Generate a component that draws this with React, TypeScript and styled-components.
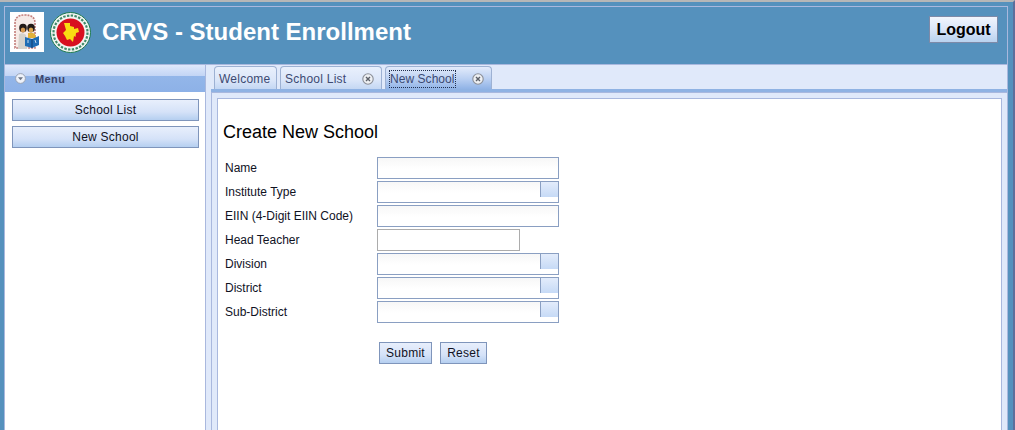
import * as React from 'react';
import styled, { createGlobalStyle } from 'styled-components';

const GlobalStyle = createGlobalStyle`
    html, body {
        margin: 0;
        padding: 0;
        background: #5591bd;
    }
    body {
        font-family: "Liberation Sans", Arial, sans-serif;
    }
`;

function SchoolLogo() {
    return (
        <LogoBox>
            <svg width="34" height="40" viewBox="0 0 34 40">
                <path d="M5 36 L5 11 Q5 3 15 3 Q25 3 25 11 L25 36 Z" fill="#f7ebe7" stroke="#c47f7c" strokeWidth="1.6" strokeDasharray="2 1" />
                <path d="M8 37 L9 22 Q13 20 16 23 L17 37 Z" fill="#d5d2cc" />
                <path d="M18 21 Q22 20 25 22 L26 26 L18 26 Z" fill="#e3b23a" />
                <ellipse cx="13" cy="16" rx="3.8" ry="4.2" fill="#231a17" />
                <ellipse cx="21" cy="16" rx="3.8" ry="4.2" fill="#231a17" />
                <ellipse cx="13" cy="18" rx="2.3" ry="2.5" fill="#d99a50" />
                <ellipse cx="21" cy="18" rx="2.3" ry="2.5" fill="#e0a84f" />
                <path d="M15 25 L22 27 L29 24 L29 33 L22 36 L15 34 Z" fill="#1f6db5" />
                <path d="M22 27 L22 36" stroke="#0f3460" strokeWidth="0.8" />
                <path d="M25 28 l1 3 M18 28 l0 3" stroke="#d8e8f5" strokeWidth="0.9" />
            </svg>
        </LogoBox>
    );
}

function GovSeal() {
    return (
        <svg width="41" height="41" viewBox="0 0 41 41">
            <circle cx="20.5" cy="20.5" r="20" fill="#f3f6f2" stroke="#1d7a4e" strokeWidth="1" />
            <circle cx="20.5" cy="20.5" r="17" fill="none" stroke="#3f8a68" strokeWidth="2.2" strokeDasharray="2.4 1.4" />
            <circle cx="20.5" cy="20.5" r="14" fill="#d8101f" />
            <path d="M14 11 L20 11 L20 14 L24 15 L24 17 L28 16 L29 20 L26 21 L25.5 25 L24 24 L23 30 L20 27 L17 28 L15 24 L13 21 L16 18 Z" fill="#f9dc12" />
        </svg>
    );
}

function CloseIcon() {
    return (
        <svg width="12" height="12" viewBox="0 0 12 12">
            <circle cx="6" cy="6" r="5.2" fill="#eef0f3" stroke="#8b8f98" strokeWidth="1.1" />
            <path d="M4 4 L8 8 M8 4 L4 8" stroke="#5b5f68" strokeWidth="1.4" />
        </svg>
    );
}

function CollapseIcon() {
    return (
        <svg width="11" height="11" viewBox="0 0 11 11">
            <circle cx="5.5" cy="5.5" r="4.9" fill="#eef2fa" stroke="#98a2b4" strokeWidth="1" />
            <path d="M3 4.3 L8 4.3 L5.5 7.3 Z" fill="#6e7686" />
        </svg>
    );
}

const fields = [
    { label: 'Name', kind: 'text' },
    { label: 'Institute Type', kind: 'combo' },
    { label: 'EIIN (4-Digit EIIN Code)', kind: 'text' },
    { label: 'Head Teacher', kind: 'short' },
    { label: 'Division', kind: 'combo' },
    { label: 'District', kind: 'combo' },
    { label: 'Sub-District', kind: 'combo' },
];

export default function App() {
    return (
        <Page>
            <GlobalStyle />
            <Shell>
                <Header>
                    <Brand>
                        <SchoolLogo />
                        <GovSeal />
                        <Title>CRVS - Student Enrollment</Title>
                    </Brand>
                    <LogoutButton>Logout</LogoutButton>
                </Header>
                <Body>
                    <Sidebar>
                        <MenuHeader>
                            <CollapseIcon />
                            <MenuTitle>Menu</MenuTitle>
                        </MenuHeader>
                        <MenuList>
                            <MenuButton>School List</MenuButton>
                            <MenuButton>New School</MenuButton>
                        </MenuList>
                    </Sidebar>
                    <Main>
                        <TabStrip>
                            <Tab $width={63}>Welcome</Tab>
                            <Tab $width={102}>
                                School List
                                <CloseSlot><CloseIcon /></CloseSlot>
                            </Tab>
                            <Tab $width={107} $active>
                                <FocusLabel>New School</FocusLabel>
                                <CloseSlot><CloseIcon /></CloseSlot>
                            </Tab>
                        </TabStrip>
                        <TabBand />
                        <TabBody>
                            <Content>
                                <FormTitle>Create New School</FormTitle>
                                <FormGrid>
                                    {fields.map((f) => (
                                        <React.Fragment key={f.label}>
                                            <FieldLabel>{f.label}</FieldLabel>
                                            <FieldBox $short={f.kind === 'short'}>
                                                {f.kind === 'combo' && <ComboTrigger />}
                                            </FieldBox>
                                        </React.Fragment>
                                    ))}
                                </FormGrid>
                                <Actions>
                                    <ActionButton $width={53}>Submit</ActionButton>
                                    <ActionButton $width={47}>Reset</ActionButton>
                                </Actions>
                            </Content>
                        </TabBody>
                    </Main>
                </Body>
            </Shell>
        </Page>
    );
}

const Page = styled.div`
    box-sizing: border-box;
    width: 1015px;
    height: 430px;
    overflow: hidden;
    background: #5591bd;
    border-top: 2px solid #b7b7b7;
    border-right: 2px solid #5d6f9c;
    padding: 4px 5px 0 4px;
`;

const Shell = styled.div`
    box-sizing: border-box;
    height: 440px;
    display: flex;
    flex-direction: column;
    border: 1px solid #a9b8de;
    border-bottom: none;
`;

const Header = styled.div`
    box-sizing: border-box;
    height: 58px;
    flex: none;
    display: flex;
    justify-content: space-between;
    align-items: flex-start;
    padding: 5px 9px 0 5px;
    background: #5591bd;
    border-bottom: 1px solid #a9b8de;
`;

const Brand = styled.div`
    display: flex;
    align-items: center;
    height: 40px;
    gap: 6px;
`;

const LogoBox = styled.div`
    width: 34px;
    height: 40px;
    background: #fff;
    line-height: 0;
`;

const Title = styled.div`
    margin-left: 5px;
    font-size: 24px;
    font-weight: 700;
    color: #fff;
    white-space: nowrap;
`;

const LogoutButton = styled.div`
    box-sizing: border-box;
    width: 69px;
    height: 27px;
    margin-top: 4px;
    display: flex;
    align-items: center;
    justify-content: center;
    font-size: 16px;
    font-weight: 700;
    color: #000;
    border: 1px solid #7d8aa8;
    background: linear-gradient(#f1f5fd, #d9e5f8 50%, #b9d2ef);
`;

const Body = styled.div`
    flex: 1;
    display: flex;
    min-height: 0;
`;

const Sidebar = styled.div`
    box-sizing: border-box;
    width: 201px;
    flex: none;
    background: #fff;
    border-right: 1px solid #a9b8de;
`;

const MenuHeader = styled.div`
    box-sizing: border-box;
    height: 27px;
    display: flex;
    align-items: center;
    gap: 9px;
    padding: 0 0 0 10px;
    background: linear-gradient(#dfe8fb, #c3d5f5 40%, #93b6e9 42%, #8db1e7);
`;

const MenuTitle = styled.span`
    font-size: 11px;
    font-weight: 700;
    letter-spacing: 0.4px;
    color: #3d4468;
`;

const MenuList = styled.div`
    display: flex;
    flex-direction: column;
    gap: 5px;
    padding: 7px 6px 0 7px;
`;

const MenuButton = styled.div`
    box-sizing: border-box;
    height: 22px;
    display: flex;
    align-items: center;
    justify-content: center;
    font-size: 12px;
    letter-spacing: 0.25px;
    color: #10121f;
    border: 1px solid #7f95bb;
    background: linear-gradient(#e8effc, #d5e2f8 60%, #b5cff0);
`;

const Main = styled.div`
    flex: 1;
    min-width: 0;
    display: flex;
    flex-direction: column;
    background: #e0e9fa;
`;

const TabStrip = styled.div`
    height: 24px;
    flex: none;
    display: flex;
    align-items: flex-end;
    gap: 3px;
    padding-left: 8px;
`;

const Tab = styled.div<{ $width: number; $active?: boolean }>`
    box-sizing: border-box;
    width: ${(p) => p.$width}px;
    height: 23px;
    display: flex;
    align-items: center;
    justify-content: space-between;
    padding: 1px 7px 0 4px;
    font-size: 12px;
    letter-spacing: 0.25px;
    color: #3c4a72;
    white-space: nowrap;
    border: 1px solid #9db1d3;
    border-bottom: none;
    border-radius: 4px 4px 0 0;
    background: ${(p) =>
        p.$active
            ? 'linear-gradient(#e3ebfb, #b9cff2 55%, #90b3e6)'
            : 'linear-gradient(#e9f0fc, #dbe6f9 60%, #c4d7f3)'};
`;

const FocusLabel = styled.span`
    outline: 1px dotted #22304f;
    letter-spacing: 0.05px;
    padding: 1px 0;
`;

const CloseSlot = styled.span`
    display: flex;
    line-height: 0;
`;

const TabBand = styled.div`
    height: 3px;
    flex: none;
    margin-left: 5px;
    background: #8fb2e3;
    border-bottom: 1px solid #a9b8de;
`;

const TabBody = styled.div`
    flex: 1;
    min-height: 0;
    margin-left: 5px;
    border-left: 1px solid #a9b8de;
    padding: 5px 5px 0 5px;
`;

const Content = styled.div`
    box-sizing: border-box;
    height: 100%;
    background: #fff;
    border: 1px solid #a9b8de;
    padding: 23px 0 0 5px;
`;

const FormTitle = styled.h1`
    margin: 0 0 14px;
    font-size: 18px;
    line-height: 21px;
    font-weight: 400;
    color: #000;
`;

const FormGrid = styled.div`
    display: grid;
    grid-template-columns: 152px 182px;
    grid-auto-rows: 22px;
    row-gap: 2px;
    align-items: center;
    padding-left: 2px;
`;

const FieldLabel = styled.div`
    font-size: 12px;
    color: #10121f;
`;

const FieldBox = styled.div<{ $short?: boolean }>`
    box-sizing: border-box;
    position: relative;
    width: ${(p) => (p.$short ? '143px' : '182px')};
    height: 22px;
    border: 1px solid ${(p) => (p.$short ? '#acacac' : '#8a9fc2')};
    background: ${(p) => (p.$short ? '#fff' : 'linear-gradient(#f7f7f7, #fff 55%)')};
`;

const ComboTrigger = styled.div`
    position: absolute;
    top: 0;
    right: 0;
    width: 18px;
    height: 15px;
    box-sizing: border-box;
    border-left: 1px solid #8a9fc2;
    background: linear-gradient(#e3ecfb, #c6daf6);
`;

const Actions = styled.div`
    display: flex;
    gap: 8px;
    padding: 19px 0 0 156px;
`;

const ActionButton = styled.div<{ $width: number }>`
    box-sizing: border-box;
    width: ${(p) => p.$width}px;
    height: 22px;
    display: flex;
    align-items: center;
    justify-content: center;
    font-size: 12px;
    letter-spacing: 0.25px;
    color: #10121f;
    border: 1px solid #7f95bb;
    background: linear-gradient(#e8effc, #d5e2f8 60%, #b5cff0);
`;
